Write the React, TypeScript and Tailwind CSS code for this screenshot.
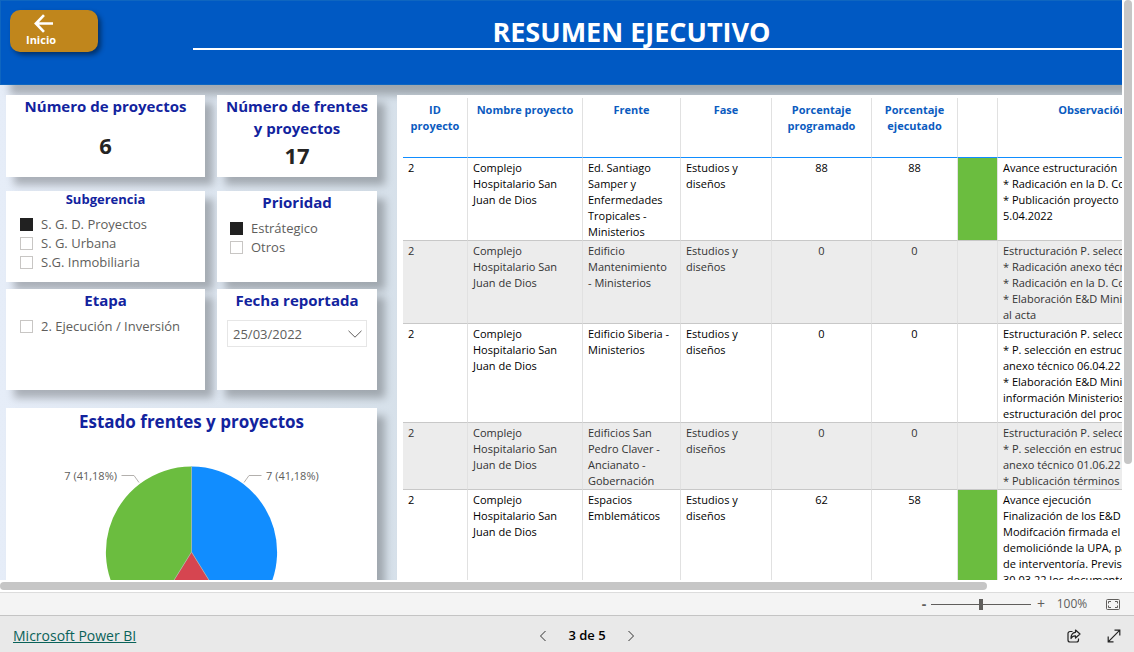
import type { ReactNode } from "react";

type Row = {
  front: string;
  planned: number;
  done: number;
  onTrack: boolean;
  notes: string;
};

const rows: Row[] = [
  {
    front: "Ed. Santiago\nSamper y\nEnfermedades\nTropicales -\nMinisterios",
    planned: 88,
    done: 88,
    onTrack: true,
    notes:
      "Avance estructuración\n* Radicación en la D. Contratos\n* Publicación proyecto\n5.04.2022",
  },
  {
    front: "Edificio\nMantenimiento\n- Ministerios",
    planned: 0,
    done: 0,
    onTrack: false,
    notes:
      "Estructuración P. selección\n* Radicación anexo técnico\n* Radicación en la D. Contratos\n* Elaboración E&D Ministerios\nal acta",
  },
  {
    front: "Edificio Siberia -\nMinisterios",
    planned: 0,
    done: 0,
    onTrack: false,
    notes:
      "Estructuración P. selección\n* P. selección en estructuración\nanexo técnico 06.04.22\n* Elaboración E&D Ministerios\ninformación Ministerios\nestructuración del proceso",
  },
  {
    front: "Edificios San\nPedro Claver -\nAncianato -\nGobernación",
    planned: 0,
    done: 0,
    onTrack: false,
    notes:
      "Estructuración P. selección\n* P. selección en estructuración\nanexo técnico 01.06.22\n* Publicación términos",
  },
  {
    front: "Espacios\nEmblemáticos",
    planned: 62,
    done: 58,
    onTrack: true,
    notes:
      "Avance ejecución\nFinalización de los E&D\nModifcación firmada el\ndemoliciónde la UPA, para\nde interventoría. Previsto\n30.03.22 los documentos",
  },
];

function Card({ className = "", children }: { className?: string; children: ReactNode }) {
  return (
    <section className={`bg-white shadow-[8px_8px_8px_rgba(0,0,0,0.26)] ${className}`}>
      {children}
    </section>
  );
}

function Check({ label, checked = false }: { label: string; checked?: boolean }) {
  return (
    <label className="flex h-[19px] items-center gap-2 text-[13px] text-[#605e5c]">
      <input
        type="checkbox"
        defaultChecked={checked}
        className="size-[13px] shrink-0 appearance-none border border-[#c8c6c4] bg-white checked:border-[#212121] checked:bg-[#212121]"
      />
      {label}
    </label>
  );
}

function StatusPie() {
  return (
    <svg viewBox="0 0 371 220" className="block w-full" role="img" aria-label="Estado frentes y proyectos">
      <path d="M185.5 117V31.5A85.5 85.5 0 0 1 230.6 189.7Z" fill="#118dff" />
      <path d="M185.5 117L230.6 189.7A85.5 85.5 0 0 1 140.4 189.7Z" fill="#d64550" />
      <path d="M185.5 117L140.4 189.7A85.5 85.5 0 0 1 185.5 31.5Z" fill="#6bbd3f" />
      <path d="M185.5 117V31.5M185.5 117L230.6 189.7M185.5 117L140.4 189.7" stroke="#a9b6a9" strokeWidth=".7" />
      <path d="M115.500 40.500H128L133 47.500M255.500 40.500H243L238 47.500" fill="none" stroke="#b3b0ad" />
      <g fill="#605e5c" fontSize="11">
        <text x="111" y="45" textAnchor="end">7 (41,18%)</text>
        <text x="260" y="45">7 (41,18%)</text>
      </g>
    </svg>
  );
}

function ProjectsTable() {
  const th = "border-r border-b border-r-[#e1e1e1] border-b-[#118dff] pt-1 font-bold whitespace-pre";
  const td = "border-r border-b border-r-[#e1e1e1] border-b-[#c8c8c8] px-[5px] pt-[2px] whitespace-pre";
  return (
    <table className="w-full table-fixed border-separate border-spacing-0 text-[11px] leading-4">
      <colgroup>
        <col className="w-[65px]" />
        <col className="w-[115px]" />
        <col className="w-[98px]" />
        <col className="w-[91px]" />
        <col className="w-[100px]" />
        <col className="w-[86px]" />
        <col className="w-[40px]" />
        <col />
      </colgroup>
      <thead className="text-[#0b5bc0]">
        <tr className="h-[60px] align-top">
          <th className={th}>{"ID\nproyecto"}</th>
          <th className={th}>Nombre proyecto</th>
          <th className={th}>Frente</th>
          <th className={th}>Fase</th>
          <th className={th}>{"Porcentaje\nprogramado"}</th>
          <th className={th}>{"Porcentaje\nejecutado"}</th>
          <th className={th} />
          <th className={th}>Observación</th>
        </tr>
      </thead>
      <tbody>
        {rows.map((r) => (
          <tr key={r.front} className="align-top text-black even:bg-[#ececec] even:text-[#333]">
            <td className={td}>2</td>
            <td className={td}>{"Complejo\nHospitalario San\nJuan de Dios"}</td>
            <td className={td}>{r.front}</td>
            <td className={td}>{"Estudios y\ndiseños"}</td>
            <td className={`${td} text-center`}>{r.planned}</td>
            <td className={`${td} text-center`}>{r.done}</td>
            <td className={`${td} ${r.onTrack ? "bg-[#6bbd3f]" : ""}`} />
            <td className={td}>{r.notes}</td>
          </tr>
        ))}
      </tbody>
    </table>
  );
}

export default function App() {
  const title = "text-center text-[15px] leading-[22px] font-bold text-[#12239e]";
  return (
    <div className="flex h-screen flex-col bg-white font-['Open_Sans',sans-serif]">
      <div className="flex min-h-0 flex-1 gap-[2px] pr-[2px]">
        <main className="min-w-0 flex-1 overflow-hidden">
          <div className="flex h-[720px] w-[1280px] flex-col bg-linear-to-r from-[#e6edf8] to-[#d2dde6] to-40%">
            <header className="flex h-[85px] shrink-0 items-start border border-[#0f66c0] bg-[#0059c3] shadow-[10px_10px_8px_rgba(0,0,0,0.26)]">
              <button className="mt-[9px] ml-[9px] flex h-[42px] w-[88px] flex-col items-start rounded-[10px] bg-[#c0861c] pt-1 pl-4 text-[11px] leading-3 font-bold text-white shadow-[3px_3px_5px_rgba(0,0,0,0.45)]">
                <svg viewBox="0 0 20 20" className="mb-[1px] ml-2 size-[19px]" fill="none" stroke="currentColor" strokeWidth="2.800">
                  <path d="M20 10H2.500M10.500 1.200L2 10L10.500 18.800" />
                </svg>
                Inicio
              </button>
              <h1 className="ml-[95px] flex-1 border-b-2 border-white pt-[14px] pr-[209px] text-center text-[27px] leading-[33px] font-bold text-white">
                RESUMEN EJECUTIVO
              </h1>
            </header>

            <div className="flex min-h-0 flex-1 gap-5 pt-[10px] pr-3 pl-[6px]">
              <div className="flex w-[371px] shrink-0 flex-col">
                <div className="grid h-[82px] grid-cols-[199px_160px] gap-3">
                  <Card>
                    <h2 className={title}>Número de proyectos</h2>
                    <p className="mt-3 text-center text-[22px] leading-8 font-bold text-[#252423]">6</p>
                  </Card>
                  <Card className="px-2">
                    <h2 className={title}>Número de frentes y proyectos</h2>
                    <p className="text-center text-[22px] leading-8 font-bold text-[#252423]">17</p>
                  </Card>
                </div>
                <div className="mt-[14px] grid h-[91px] grid-cols-[199px_160px] gap-3">
                  <Card>
                    <h2 className="text-center text-[13px] leading-4 font-bold text-[#12239e]">Subgerencia</h2>
                    <div className="pt-2 pl-[14px]">
                      <Check label="S. G. D. Proyectos" checked />
                      <Check label="S. G. Urbana" />
                      <Check label="S.G. Inmobiliaria" />
                    </div>
                  </Card>
                  <Card>
                    <h2 className={title}>Prioridad</h2>
                    <div className="pt-[6px] pl-[13px]">
                      <Check label="Estrátegico" checked />
                      <Check label="Otros" />
                    </div>
                  </Card>
                </div>
                <div className="mt-[7px] grid h-[101px] grid-cols-[199px_160px] gap-3">
                  <Card>
                    <h2 className={title}>Etapa</h2>
                    <div className="pt-[6px] pl-[14px]">
                      <Check label="2. Ejecución / Inversión" />
                    </div>
                  </Card>
                  <Card>
                    <h2 className={title}>Fecha reportada</h2>
                    <div className="relative mx-[10px] mt-[9px]">
                      <select
                        aria-label="Fecha reportada"
                        className="h-[27px] w-full appearance-none border border-[#e6e6e6] bg-white px-[5px] pt-[3px] text-[13px] text-[#605e5c]"
                      >
                        <option>25/03/2022</option>
                      </select>
                      <svg viewBox="0 0 14 8" className="pointer-events-none absolute top-[10px] right-[5px] w-[14px]" fill="none" stroke="#605e5c">
                        <path d="M.5 .8L7 7.200L13.500 .8" />
                      </svg>
                    </div>
                  </Card>
                </div>
                <Card className="mt-[18px] flex-1">
                  <h2 className="text-center text-[17px] leading-[27px] font-bold text-[#12239e]">
                    Estado frentes y proyectos
                  </h2>
                  <StatusPie />
                </Card>
              </div>
              <Card className="min-w-0 flex-1 overflow-hidden pt-[3px] pr-20 pl-[6px]">
                <ProjectsTable />
              </Card>
            </div>
          </div>
        </main>
        <div className="w-2">
          <div className="h-[80%] rounded-full bg-[#c6c6c6]" />
        </div>
      </div>

      <div className="py-[2px]">
        <div className="h-2 w-[87%] rounded-full bg-[#c6c6c6]" />
      </div>

      <div className="flex h-[23px] items-center justify-end border-t border-[#dcdcdc] bg-[#f4f4f4] pr-[14px] text-xs text-[#605e5c]">
        <button aria-label="Alejar" className="w-[14px] text-sm leading-5 font-bold">-</button>
        <input
          type="range"
          aria-label="Zoom"
          className="h-3 w-[100px] appearance-none bg-[linear-gradient(#605e5c,#605e5c)] bg-size-[100%_1px] bg-center bg-no-repeat [&::-webkit-slider-thumb]:h-[11px] [&::-webkit-slider-thumb]:w-1 [&::-webkit-slider-thumb]:appearance-none [&::-webkit-slider-thumb]:bg-[#605e5c]"
        />
        <button aria-label="Acercar" className="w-5 text-sm leading-5">+</button>
        <span className="w-[42px] text-center">100%</span>
        <button aria-label="Ajustar a la página" className="ml-[13px]">
          <svg viewBox="0 0 14 11" className="block h-[11px] w-[14px]" fill="none" stroke="#605e5c">
            <rect x=".5" y=".5" width="13" height="10" rx="1" />
            <path d="M5 2.500H2.500V4.500M9 2.500H11.500V4.500M2.500 6.500V8.500H5M11.500 6.500V8.500H9" />
          </svg>
        </button>
      </div>

      <footer className="grid h-[37px] grid-cols-3 items-center border-t border-[#c4c4c4] bg-[#e9e9e9] px-[13px] pt-1 text-[13px]">
        <a href="https://powerbi.microsoft.com" className="justify-self-start text-sm text-[#0a6259] underline">
          Microsoft Power BI
        </a>
        <nav className="ml-10 flex items-center justify-center gap-[21px] font-semibold text-black">
          <button aria-label="Página anterior">
            <svg viewBox="0 0 8 12" className="block h-3 w-2" fill="none" stroke="#333">
              <path d="M6.500 1L1.500 6L6.500 11" />
            </svg>
          </button>
          <span>3 de 5</span>
          <button aria-label="Página siguiente">
            <svg viewBox="0 0 8 12" className="block h-3 w-2" fill="none" stroke="#333">
              <path d="M1.500 1L6.500 6L1.500 11" />
            </svg>
          </button>
        </nav>
        <div className="flex items-center justify-end gap-[26px] text-[#222]">
          <button aria-label="Compartir">
            <svg viewBox="0 0 14 14" className="block size-[14px]" fill="none" stroke="currentColor" strokeWidth="1.200" strokeLinejoin="round">
              <path d="M5.500 2.500H3A2 2 0 0 0 1 4.500V11A2 2 0 0 0 3 13H9.500A2 2 0 0 0 11.500 11V9.500" />
              <path d="M8.500 1L13 5L8.500 9V6.800C6.500 6.700 5 7.500 4 9.500C4 6 5.500 3.600 8.500 3.300Z" />
            </svg>
          </button>
          <button aria-label="Pantalla completa">
            <svg viewBox="0 0 14 14" className="block size-[14px]" fill="none" stroke="currentColor" strokeWidth="1.200">
              <path d="M1.200 12.800L12.800 1.200M7.500 1.200H12.800V6.500M1.200 7.500V12.800H6.500" />
            </svg>
          </button>
        </div>
      </footer>
    </div>
  );
}
